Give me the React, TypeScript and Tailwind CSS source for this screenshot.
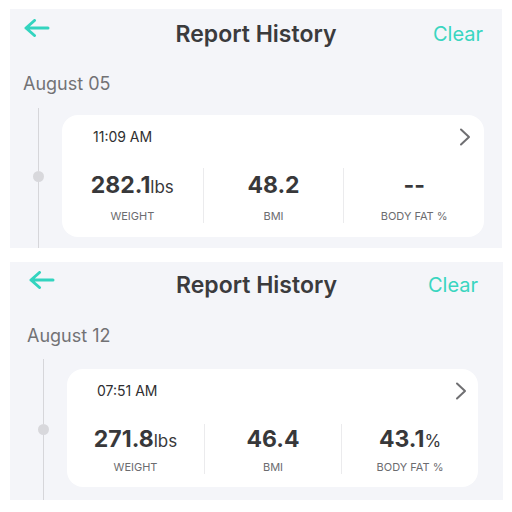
import React from 'react';

type Stat = { value: string; unit?: string; label: string };

interface Report {
  date: string;
  time: string;
  stats: Stat[];
}

// per-screenshot spacing, the two captures differ by a few pixels
const layouts = {
  first: {
    panel: 'w-[492px] h-[239px]',
    header: 'h-[52px] px-[13px] pt-[10px]',
    title: 'mt-[1px]',
    clear: 'mt-[3px] pr-[6px]',
    date: 'pl-[13px] mt-[12px]',
    row: 'mt-[13px] pl-[18px] pr-[18px]',
    lineTop: 'h-[63px]',
    card: 'mt-[7px] h-[122px] ml-[14px]',
    cardTop: 'pl-[31px] pr-[13px] pt-[13px]',
    stats: 'mt-[22px]',
    col: 'h-[55px] pt-[4px]',
    label: 'mt-[9px]',
  },
  second: {
    panel: 'w-[493px] h-[238px] mt-[14px]',
    header: 'h-[52px] px-[18px] pt-[9px]',
    title: 'mt-[0px]',
    clear: 'mt-[2px] pr-[7px]',
    date: 'pl-[17px] mt-[11px]',
    row: 'mt-[12px] pl-[23px] pr-[25px]',
    lineTop: 'h-[65px]',
    card: 'mt-[10px] h-[118px] ml-[14px]',
    cardTop: 'pl-[30px] pr-[11px] pt-[13px]',
    stats: 'mt-[24px]',
    col: 'h-[50px] pt-[2px]',
    label: 'mt-[6px]',
  },
};

const reports: { data: Report; layout: keyof typeof layouts }[] = [
  {
    layout: 'first',
    data: {
      date: 'August 05',
      time: '11:09 AM',
      stats: [
        { value: '282.1', unit: 'lbs', label: 'WEIGHT' },
        { value: '48.2', label: 'BMI' },
        { value: '--', label: 'BODY FAT %' },
      ],
    },
  },
  {
    layout: 'second',
    data: {
      date: 'August 12',
      time: '07:51 AM',
      stats: [
        { value: '271.8', unit: 'lbs', label: 'WEIGHT' },
        { value: '46.4', label: 'BMI' },
        { value: '43.1', unit: '%', label: 'BODY FAT %' },
      ],
    },
  },
];

function BackArrow() {
  return (
    <svg width="27" height="18" viewBox="0 0 27 18" fill="none">
      <path
        d="M3 9H25M11.5 1.5L3 9L11.5 16.5"
        stroke="#33d4bf"
        strokeWidth="3"
        strokeLinecap="round"
        strokeLinejoin="round"
      />
    </svg>
  );
}

function Chevron() {
  return (
    <svg width="12" height="18" viewBox="0 0 12 18" fill="none">
      <path d="M2 1.5L10 9L2 16.5" stroke="#6f6f72" strokeWidth="2" strokeLinecap="round" strokeLinejoin="round" />
    </svg>
  );
}

function ReportPanel({ data, layout }: { data: Report; layout: keyof typeof layouts }) {
  const l = layouts[layout];
  return (
    <section className={`bg-[#f4f5f9] flex flex-col overflow-hidden ${l.panel}`}>
      <div className={`grid grid-cols-[1fr_auto_1fr] items-start ${l.header}`}>
        <div>
          <BackArrow />
        </div>
        <h1 className={`text-[23px] leading-[28px] font-semibold text-[#3b3b3d] ${l.title}`}>Report History</h1>
        <div className={`text-right text-[20px] leading-[24px] text-[#3ad5c0] ${l.clear}`}>Clear</div>
      </div>

      <div className={`text-[18px] leading-[22px] text-[#727275] ${l.date}`}>{data.date}</div>

      <div className={`flex flex-1 ${l.row}`}>
        <div className="w-[20px] flex flex-col items-center">
          <div className={`w-px bg-[#d6d6da] ${l.lineTop}`} />
          <div className="w-[11px] h-[11px] rounded-full bg-[#d8d8dc]" />
          <div className="w-px flex-1 bg-[#d6d6da]" />
        </div>

        <div className={`flex-1 bg-white rounded-[16px] ${l.card}`}>
          <div className={`flex items-center justify-between ${l.cardTop}`}>
            <span className="text-[14px] leading-[18px] text-[#2f2f31]">{data.time}</span>
            <Chevron />
          </div>
          <div className={`grid grid-cols-3 ${l.stats}`}>
            {data.stats.map((s, i) => (
              <div
                key={s.label}
                className={`flex flex-col items-center ${l.col} ${i > 0 ? 'border-l border-[#ebebed]' : ''}`}
              >
                <div className="leading-[26px] text-[#38383a]">
                  <span className="text-[23px] font-bold">{s.value}</span>
                  {s.unit && <span className="text-[17px]">{s.unit}</span>}
                </div>
                <div className={`text-[11px] leading-[14px] text-[#6c6c6f] ${l.label}`}>{s.label}</div>
              </div>
            ))}
          </div>
        </div>
      </div>
    </section>
  );
}

export default function App() {
  return (
    <div className="w-[512px] h-[512px] bg-white pt-[9px] pl-[10px] font-['Inter',sans-serif]">
      {reports.map((r) => (
        <ReportPanel key={r.data.date} data={r.data} layout={r.layout} />
      ))}
    </div>
  );
}
